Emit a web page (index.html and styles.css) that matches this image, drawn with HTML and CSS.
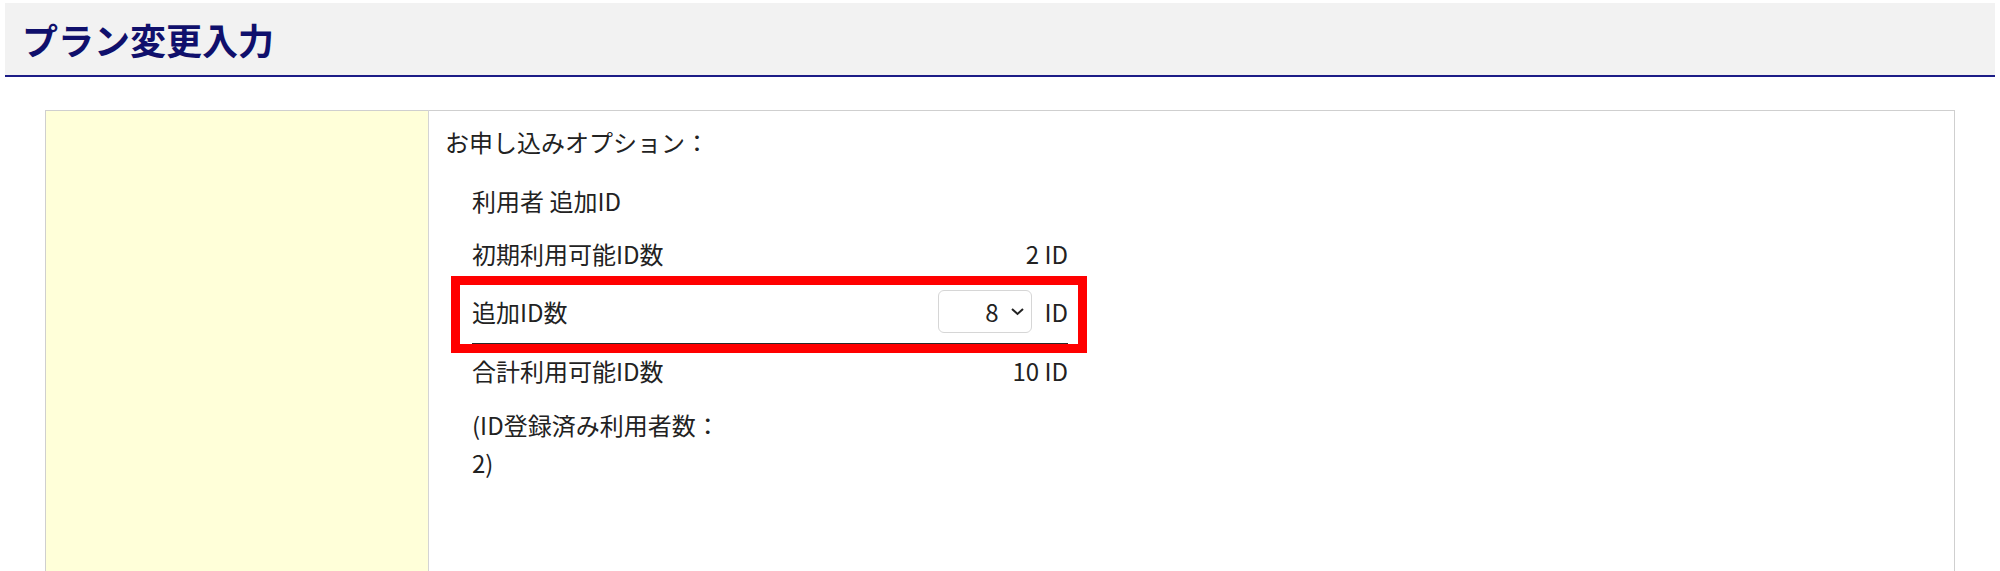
FILE: index.html
```html
<!DOCTYPE html>
<html lang="ja">
<head>
  <meta charset="UTF-8">
  <meta name="viewport" content="width=device-width, initial-scale=1.0">
  <title>プラン変更入力</title>
  <link rel="stylesheet" href="styles.css">
</head>
<body>
  <div class="page-header">
    <h1>プラン変更入力</h1>
  </div>

  <table class="form-table">
    <tr>
      <th class="label-cell"></th>
      <td class="value-cell">
        <p class="option-title">お申し込みオプション：</p>
        <div class="id-list">
          <div class="id-row">利用者 追加ID</div>
          <div class="id-row">
            <span>初期利用可能ID数</span>
            <span>2 ID</span>
          </div>
          <!-- highlighted row -->
          <div class="id-row id-row-add">
            <span>追加ID数</span>
            <span class="id-value">
              <span class="select-wrap">
                <select id="addCount">
                  <option>0</option>
                  <option>1</option>
                  <option>2</option>
                  <option>3</option>
                  <option>4</option>
                  <option>5</option>
                  <option>6</option>
                  <option>7</option>
                  <option selected>8</option>
                  <option>9</option>
                  <option>10</option>
                </select>
                <svg class="chevron" width="15" height="9" viewBox="0 0 15 9">
                  <path d="M2 2 L7.5 7 L13 2" fill="none" stroke="#222" stroke-width="2"/>
                </svg>
              </span>
              <span class="unit">ID</span>
            </span>
            <span class="highlight"></span>
          </div>
          <div class="id-row">
            <span>合計利用可能ID数</span>
            <span>10 ID</span>
          </div>
          <div class="id-note">(ID登録済み利用者数：2)</div>
        </div>
      </td>
    </tr>
  </table>
</body>
</html>
```

FILE: styles.css
```css
body {
  font-family: "Noto Sans CJK JP", "Noto Sans", sans-serif;
  margin: 3px 5px;
  color: #222;
  background-color: #fff;
}
.page-header {
  background-color: #f2f2f2;
  border-bottom: 2px solid #1c1c86;
  height: 72px;
  display: flex;
  align-items: center;
  padding-left: 17px;
}
.page-header h1 {
  margin: 0;
  font-size: 36px;
  font-weight: bold;
  color: #10106c;
  line-height: 1;
}
.form-table {
  margin: 33px 40px 0 40px;
  width: calc(100% - 80px);
  border-collapse: collapse;
  border: 1px solid #cfcfcf;
}
.label-cell {
  width: 382px;
  background-color: #ffffd9;
  border-right: 1px solid #d4d4d4;
  padding: 0;
}
.value-cell {
  vertical-align: top;
  height: 500px;
  padding: 12px 16px;
  font-size: 24px;
}
.option-title {
  margin: 0 0 13px 0;
  line-height: 38px;
}
.id-list {
  margin-left: 27px;
  width: 596px;
}
.id-row {
  display: flex;
  justify-content: space-between;
  align-items: center;
  line-height: 38px;
  padding: 7.5px 0;
}
.id-row-add {
  position: relative;
  padding: 10px 0;
  border-bottom: 1px solid #2a2a2a;
  box-shadow: 0 1px 0 #aaa;
}
.id-value {
  display: flex;
  align-items: center;
}
.select-wrap {
  position: relative;
  display: inline-block;
  height: 43px;
}
.select-wrap select {
  appearance: none;
  -webkit-appearance: none;
  width: 94px;
  height: 43px;
  border: 1px solid #d6d6d6;
  border-radius: 6px;
  background-color: #fff;
  font-family: inherit;
  font-size: 24px;
  color: #222;
  text-align: right;
  text-align-last: right;
  padding: 0 33px 0 8px;
}
.chevron {
  position: absolute;
  right: 7px;
  top: 17px;
  pointer-events: none;
}
.unit {
  margin-left: 12px;
}
.highlight {
  position: absolute;
  left: -21px;
  right: -19px;
  top: -4px;
  bottom: -10px;
  border: 9px solid #ff0000;
  pointer-events: none;
}
.id-note {
  width: 258px;
  line-height: 38px;
  padding-top: 9px;
}
```
